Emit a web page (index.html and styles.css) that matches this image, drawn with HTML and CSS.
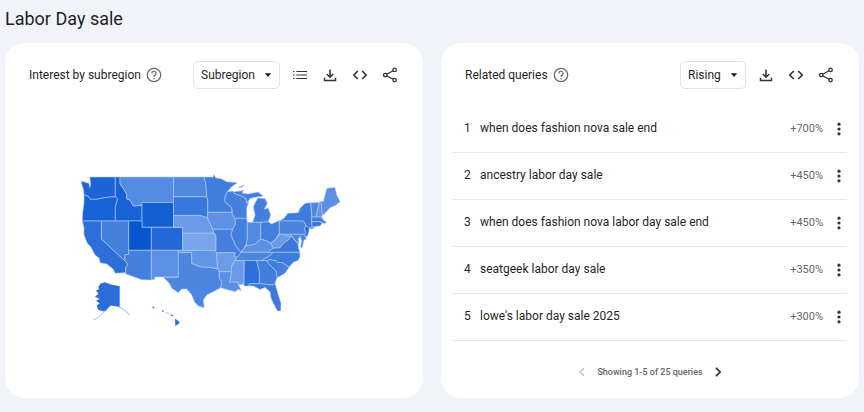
FILE: index.html
```
<!DOCTYPE html>
<html lang="en">
<head>
<meta charset="utf-8">
<meta name="viewport" content="width=device-width, initial-scale=1">
<title>Labor Day sale</title>
<link rel="stylesheet" href="styles.css">
</head>
<body>
<svg class="defs" aria-hidden="true">
  <symbol id="help" viewBox="0 0 16 16"><circle cx="8" cy="8" r="6.7" fill="none" stroke="currentColor" stroke-width="1.2"/><path d="M5.9 6.4a2.1 2.1 0 1 1 3.3 1.7C8.400 8.700 8 9 8 9.900" fill="none" stroke="currentColor" stroke-width="1.200"/><circle cx="8" cy="11.700" r=".8" fill="currentColor"/></symbol>
  <symbol id="list" viewBox="0 0 16 16"><path d="M4.300 4.500H15M4.300 8H15M4.300 11.500H15M1 4.500h1.500M1 8h1.500M1 11.500h1.500" fill="none" stroke="currentColor" stroke-width="1.200"/></symbol>
  <symbol id="download" viewBox="0 0 16 16"><path d="M8 2.500v7.500M4.800 7 8 10.200 11.200 7M2.500 10.800v2.700h11v-2.700" fill="none" stroke="currentColor" stroke-width="1.500"/></symbol>
  <symbol id="code" viewBox="0 0 16 16"><path d="M5.800 4 1.800 8l4 4M10.200 4l4 4-4 4" fill="none" stroke="currentColor" stroke-width="1.600"/></symbol>
  <symbol id="share" viewBox="0 0 16 16"><g fill="none" stroke="currentColor" stroke-width="1.300"><circle cx="3.200" cy="8" r="1.700"/><circle cx="12.600" cy="2.900" r="1.700"/><circle cx="12.600" cy="13.100" r="1.700"/><path d="m4.700 7.200 6.400-3.500M4.700 8.800l6.400 3.500"/></g></symbol>
  <symbol id="more" viewBox="0 0 16 16"><g fill="currentColor"><circle cx="8" cy="3.200" r="1.600"/><circle cx="8" cy="8" r="1.600"/><circle cx="8" cy="12.800" r="1.600"/></g></symbol>
  <symbol id="prev" viewBox="0 0 16 16"><path d="M10 4.300 6 8l4 3.700" fill="none" stroke="currentColor" stroke-width="1.300"/></symbol>
  <symbol id="next" viewBox="0 0 16 16"><path d="M6 3.800 10.200 8 6 12.200" fill="none" stroke="currentColor" stroke-width="1.700"/></symbol>
  <symbol id="caret" viewBox="0 0 8 8"><path d="M.8 2.300h6.400L4 6z" fill="currentColor"/></symbol>
</svg>
<h1 class="title">Labor Day sale</h1>
<main class="cards">
  <section class="card">
    <header class="card-head">
      <h2 class="card-title">Interest by subregion</h2>
      <button class="icon help" aria-label="Help"><svg><use href="#help"/></svg></button>
      <div class="picker">
        <select aria-label="Region level"><option>Subregion</option></select>
        <svg class="caret"><use href="#caret"/></svg>
      </div>
      <div class="tools">
        <button class="icon" aria-label="List"><svg><use href="#list"/></svg></button>
        <button class="icon" aria-label="Download"><svg><use href="#download"/></svg></button>
        <button class="icon" aria-label="Embed"><svg><use href="#code"/></svg></button>
        <button class="icon" aria-label="Share"><svg><use href="#share"/></svg></button>
      </div>
    </header>
    <svg class="map" viewBox="66 172 280 158" role="img" aria-label="Map of interest by state">
      <g class="states">
        <path fill="#1d64d7" d="M81 181l5 1.500 3 1 .7 4 1-3-.5-4-.5-3.500H115.300V196.700L106.700 197.300 96.700 199.300 90 199.300 88.300 196.300 84 195 83.500 190 82 185z"/>
        <path fill="#1861d6" d="M84 195L88.300 196.300 90 199.300 96.700 199.300 106.700 197.300 115.300 196.700 117.700 199 115.300 206.700V221H82.300L82.500 214 84 203z"/>
        <path fill="#1861d6" d="M115.300 177H120V184L123.300 188.300 126.700 194.300V199L130 200 133.300 206 142 205.300V221H115.300V206.700L117.700 199 115.300 196.700z"/>
        <path fill="#558ce3" d="M120 177H173.500V202.500H142V205.300L133.300 206 130 200 126.700 199V194.300L123.300 188.300 120 184z"/>
        <path fill="#155fd4" d="M142 202.500H173.500V227.300H142z"/>
        <path fill="#4481df" d="M101.300 221H128.700V254.300L125 255V260.700L126.700 262.700 101.300 239z"/>
        <path fill="#0856cf" d="M128.700 221H142V227.300H151.300V250.300H128.700z"/>
        <path fill="#2368d8" d="M151.300 227.300H182.700V250.300H151.300z"/>
        <path fill="#2d6fda" d="M82.300 221H101.300V239L126.700 262.700 127.700 264.300 125.500 268 125.700 272.700 115 273.300 113.300 269.300 106.700 264 100 262.700 99.300 258.300 95 255 90.700 246.700 87.300 243.300 84 235V228z"/>
        <path fill="#4481df" d="M128.700 250.300H151.300V280L141.700 279.700 125.700 274 125.500 268 127.700 264.300 126.700 262.700 125 260.700V255L128.700 254.300z"/>
        <path fill="#5b90e5" d="M151.300 250.300H178.300V277H155L154.300 279.500 151.300 280z"/>
        <path fill="#4d86e1" d="M178.300 252.300H191.700V263.300L200 266.700 210 267.300 218.300 269 219.300 271.700V278.300L221.700 281.700 220.700 287.700 213.300 291.700 206.700 295 203.300 300 204.300 307.700 198.300 306 194.500 302 191.700 295 186.700 289 181.700 289 178.300 292.700 171.700 288.300 169.300 283.300 163.300 277.300H178.300z"/>
        <path fill="#6295e6" d="M178.300 250.300H216L216.700 253.300 217.500 268.500 210 267.300 200 266.700 191.700 263.300V252.300H178.300z"/>
        <path fill="#78a4eb" d="M182.700 233H214.300L216 236V250.300H182.700z"/>
        <path fill="#6b9be8" d="M173.500 215.300H200L207.300 217.700 210 223.300 212.700 230 214.300 233H182.700V227.300H173.500z"/>
        <path fill="#3978dc" d="M173.500 196.700H206.700L207.700 200V217.700L200 215.300H173.500z"/>
        <path fill="#5189e2" d="M173.500 177H204.300L206 185 206.700 196.700H173.500z"/>
        <path fill="#407ede" d="M204.300 177H213.300L214 174.500 215.700 177.700 221.700 179 226.700 181.700 237.300 182.700 231.700 186.700 227.300 191.700 225 196.700V201.700L231.700 207.700 232.300 212.300H207.700V200L206.700 196.700 206 185z"/>
        <path fill="#4680df" d="M227.300 191.700L232.700 191 234 193.300 243.300 196.700 246 199 246.700 203 248.500 202 246.700 208.300V218.300H235L231.700 213.300 232.300 212.300 231.700 207.700 225 201.700V196.700z"/>
        <path fill="#447fdf" d="M233 191.700L240.700 191 243.500 190 242 193 248 194 258 192 263.300 196 255 197.300 250 198.500 247.300 203 246 198.500 243.300 196.700 234 193.300zM238 187.500l6-2.500-3 2.500zM258 198L265 198.500 267.300 203.300 264.300 209.300 268.300 208 270.700 215 268.300 221.700 260.700 222.300H252.700L255 215 253.300 206.700 255.500 201.700z"/>
        <path fill="#5c91e5" d="M207.700 212.300H232.300L231.700 213.300 235 218.300 235.500 224 232.700 229.300H212.500L210 223.300 207.300 217.700z"/>
        <path fill="#437fdf" d="M235 218.300H246.700L247.300 222.300V238.300L246 245 242.700 250 240.700 252 235 245 233 240 230.700 234.300 232.700 229.300 235.500 224z"/>
        <path fill="#5289e2" d="M247.300 222.300H260.700V239L255 244.300 246 246 247.300 238.300z"/>
        <path fill="#437fdf" d="M260.700 222.300L268.300 221.700 271.500 224 279.300 220.500V233.300L275 240 270.700 243.300 266.700 241 260.700 239z"/>
        <path fill="#3d7bdd" d="M279.300 221L284.300 218 287.700 213.300 298.300 212.700 300 208.300 305 203.300 310.700 202.700 311.700 216.700V225L314 227 308 228.500 303.300 221z"/>
        <path fill="#4b84e0" d="M279.300 221H303.300L306 225.700 304.300 229 306 232.700 304.300 234.300H279.300z"/>
        <path fill="#5087e1" d="M310.700 202.700L319.300 202.300 316 217H312z"/>
        <path fill="#6596e6" d="M319.300 202.300L321 201 322.700 215 321.500 217H316z"/>
        <path fill="#437fdf" d="M311.700 217H321.500L323.300 220 326.700 222.500 324 223.500 320 221.700H311.700z"/>
        <path fill="#3875db" d="M311.700 221.700H320L322 223.500 320 226 312 227z"/>
        <path fill="#5b90e4" d="M321 201L323.300 201.700 325 195 326.700 188.500 330 187.700 335 187.500 336.700 195 340 201.700 335 205.700 330 207.700 323.300 215 322 213z"/>
        <path fill="#2b6dd8" d="M306 225.700L309.300 228.300 308.500 233.300 306 237.500 304.300 234.300 306 232.700 304.300 229zM309 228.500l8-2.500-5 3z"/>
        <path fill="#4b84e0" d="M284 234.300H304.300L306.500 239 304 240 302 248.500 300.500 247 301.500 241 300 236.500 298.500 239 299 244 294 239 291.700 236 287 236z"/>
        <path fill="#6b9be8" d="M279.300 234.300H284L287 236 291.700 235.700 288.300 240 283.300 243.300 280 247.700 273.300 248.300 270.700 243.300 275 240z"/>
        <path fill="#3b79dc" d="M264 252.300L273.300 248.300 280 247.700 283.300 243.300 288.300 240 291.700 236 294 239.500 298 243.500 298.500 248 300 252.300z"/>
        <path fill="#5b90e4" d="M242.700 250L246 246 255 244.300 260.700 239 266.700 241 270.700 243.300 273.300 248.300 267 252.300H240.700z"/>
        <path fill="#4d86e1" d="M239.500 252.300H273.300L270 255.500 261.700 260.500H235L237 256z"/>
        <path fill="#4580df" d="M212.500 229.300H232.700L230.700 234.300 233 240 235 245 240.700 252 238 257H234L235 252.700H216V236L214.300 233z"/>
        <path fill="#6c9ce8" d="M216.700 252.700H235L234 257H237L235 260.300 231.700 266V271.700H219.300L217.500 268.300z"/>
        <path fill="#5a8fe4" d="M219.300 271.700H231.700L231 276 229.700 282H238L239 286 241.500 290.500 238 289.500 235 291.700 228.300 290 220.700 287.700 221.700 281.700 219.300 278.300z"/>
        <path fill="#6b9be8" d="M235 260.500H244.300L244 284 238.500 285 238 282H229.700L231 276 231.700 266z"/>
        <path fill="#2e70d9" d="M244.300 260.500H256.700L259.300 271.700V283.700H249.300L249 286H244z"/>
        <path fill="#437fdf" d="M256.700 260.500H266L268.300 263.300 276 271 277.300 277 275 283.300 273.300 285 259.300 283.700V271.700z"/>
        <path fill="#437fdf" d="M266 260.500L270 259.500 276 260.500 277.300 262.500H282.300L289 267.300 285 273.300 277.300 277.700 276 271 268.300 263.300z"/>
        <path fill="#3e7cdd" d="M261.700 260.500L270 255.500 273.300 252.300H299.700L300 256.700 298 260.500 293.300 262.300 289 267.300 282.300 262.500H277.300L276 260.500 270 259.500 266 260.500z"/>
        <path fill="#3b79dc" d="M249.300 283.700H259.300L273.300 285 275 283.300 278.300 295 281 303.300 280.700 311H277.500L273.300 303.300 271 298.300 270 291.700 265 287.500 260 289.500 253.300 286H249z"/>
      </g>
      <g fill="#2c6ed9">
        <path d="M98.300 286.700L100.700 283.500 105 282.300 110 284.300 119.700 286.300V307L111 305.500 109 307 105 311.700 98.300 310 96.700 305.500 99.500 303.500 96 300.700 99.500 299 95 296.500 98.500 294 96 290.500 99 289z"/>
        <path d="M152.500 306.500l2 .5-.5 1.500-1.500-.500zM162 310l2 1.200-1 .8-1.300-1zM170.500 314.200l3 1.300-.5.800-2-.5zM175 318.500l3.800 3 1 1.500-4.500 3z"/>
        <path d="M105 310.500Q100 317 93.500 320M119 307q6 2 10.500 8.500" fill="none" stroke="#abc6f2" stroke-width="1"/>
        <path d="M165.500 312.800l4 1" fill="none" stroke="#abc6f2"/>
      </g>
    </svg>
  </section>
  <section class="card">
    <header class="card-head">
      <h2 class="card-title">Related queries</h2>
      <button class="icon help" aria-label="Help"><svg><use href="#help"/></svg></button>
      <div class="picker">
        <select aria-label="Sort queries"><option>Rising</option></select>
        <svg class="caret"><use href="#caret"/></svg>
      </div>
      <div class="tools">
        <button class="icon" aria-label="Download"><svg><use href="#download"/></svg></button>
        <button class="icon" aria-label="Embed"><svg><use href="#code"/></svg></button>
        <button class="icon" aria-label="Share"><svg><use href="#share"/></svg></button>
      </div>
    </header>
    <table class="queries">
      <tbody>
        <tr><td class="rank">1</td><td>when does fashion nova sale end</td><td class="change">+700%</td><td class="menu"><button class="icon" aria-label="More"><svg><use href="#more"/></svg></button></td></tr>
        <tr><td class="rank">2</td><td>ancestry labor day sale</td><td class="change">+450%</td><td class="menu"><button class="icon" aria-label="More"><svg><use href="#more"/></svg></button></td></tr>
        <tr><td class="rank">3</td><td>when does fashion nova labor day sale end</td><td class="change">+450%</td><td class="menu"><button class="icon" aria-label="More"><svg><use href="#more"/></svg></button></td></tr>
        <tr><td class="rank">4</td><td>seatgeek labor day sale</td><td class="change">+350%</td><td class="menu"><button class="icon" aria-label="More"><svg><use href="#more"/></svg></button></td></tr>
        <tr><td class="rank">5</td><td>lowe's labor day sale 2025</td><td class="change">+300%</td><td class="menu"><button class="icon" aria-label="More"><svg><use href="#more"/></svg></button></td></tr>
      </tbody>
    </table>
    <nav class="pager" aria-label="Pages">
      <button class="icon" aria-label="Previous" disabled><svg><use href="#prev"/></svg></button>
      <span>Showing 1-5 of 25 queries</span>
      <button class="icon" aria-label="Next"><svg><use href="#next"/></svg></button>
    </nav>
  </section>
</main>
</body>
</html>
```
FILE: styles.css
```
* { box-sizing: border-box; }

body {
  margin: 0;
  padding: 8px 5px 14px;
  background: #f0f4f9;
  color: #1f1f1f;
  font: 12px/16px Roboto, sans-serif;
}

.defs { display: none; }

.title {
  margin: 0 0 13px;
  font-size: 18px;
  line-height: 22px;
  font-weight: 400;
}

.cards {
  display: grid;
  grid-template-columns: 1fr 1fr;
  gap: 18px;
}

.card {
  display: flex;
  flex-direction: column;
  min-height: 355px;
  background: #fff;
  border-radius: 20px;
}

.card-head {
  display: flex;
  align-items: center;
  padding: 18px 25px 0 24px;
}

.card-title {
  margin: 0;
  font-size: 12px;
  line-height: 16px;
  font-weight: 400;
}

.icon {
  display: inline-flex;
  padding: 0;
  border: 0;
  background: none;
  color: #333;
}

.icon svg { width: 16px; height: 16px; }

.help { margin-left: 5px; color: #666; }

.picker {
  display: grid;
  align-items: center;
  margin-left: auto;
}

.picker select,
.caret { grid-area: 1 / 1; }

.picker select {
  height: 28px;
  padding: 0 24px 0 7px;
  appearance: none;
  border: 1px solid #e2e4e7;
  border-radius: 5px;
  background: #fff;
  color: #1f1f1f;
  font: inherit;
}

.caret {
  width: 8px;
  height: 8px;
  justify-self: end;
  margin-right: 8px;
  pointer-events: none;
}

.tools {
  display: flex;
  gap: 14px;
  margin-left: 12px;
}

.map {
  width: 67%;
  margin: 83px 0 0 61px;
}

.states {
  stroke: #b4ccf3;
  stroke-width: .6;
  stroke-linejoin: round;
}

.queries {
  margin: 16px 12px 0 11px;
  border-collapse: collapse;
}

.queries td {
  height: 47px;
  padding: 0 0 1px;
  border-bottom: 1px solid #e4e6e9;
}

.queries .rank { width: 28px; padding-left: 12px; }

.queries .change {
  padding: 1px 1px 0 0;
  color: #666;
  font-size: 11px;
  text-align: right;
}

.queries .menu { width: 23px; padding: 1px 0 0; }

.menu .icon { display: flex; margin-left: auto; }

.pager {
  display: flex;
  align-items: center;
  justify-content: center;
  gap: 7px;
  margin-top: 23px;
  color: #666;
  font-size: 9px;
  font-weight: 500;
}

.pager .icon:disabled { color: #bbb; }
```
